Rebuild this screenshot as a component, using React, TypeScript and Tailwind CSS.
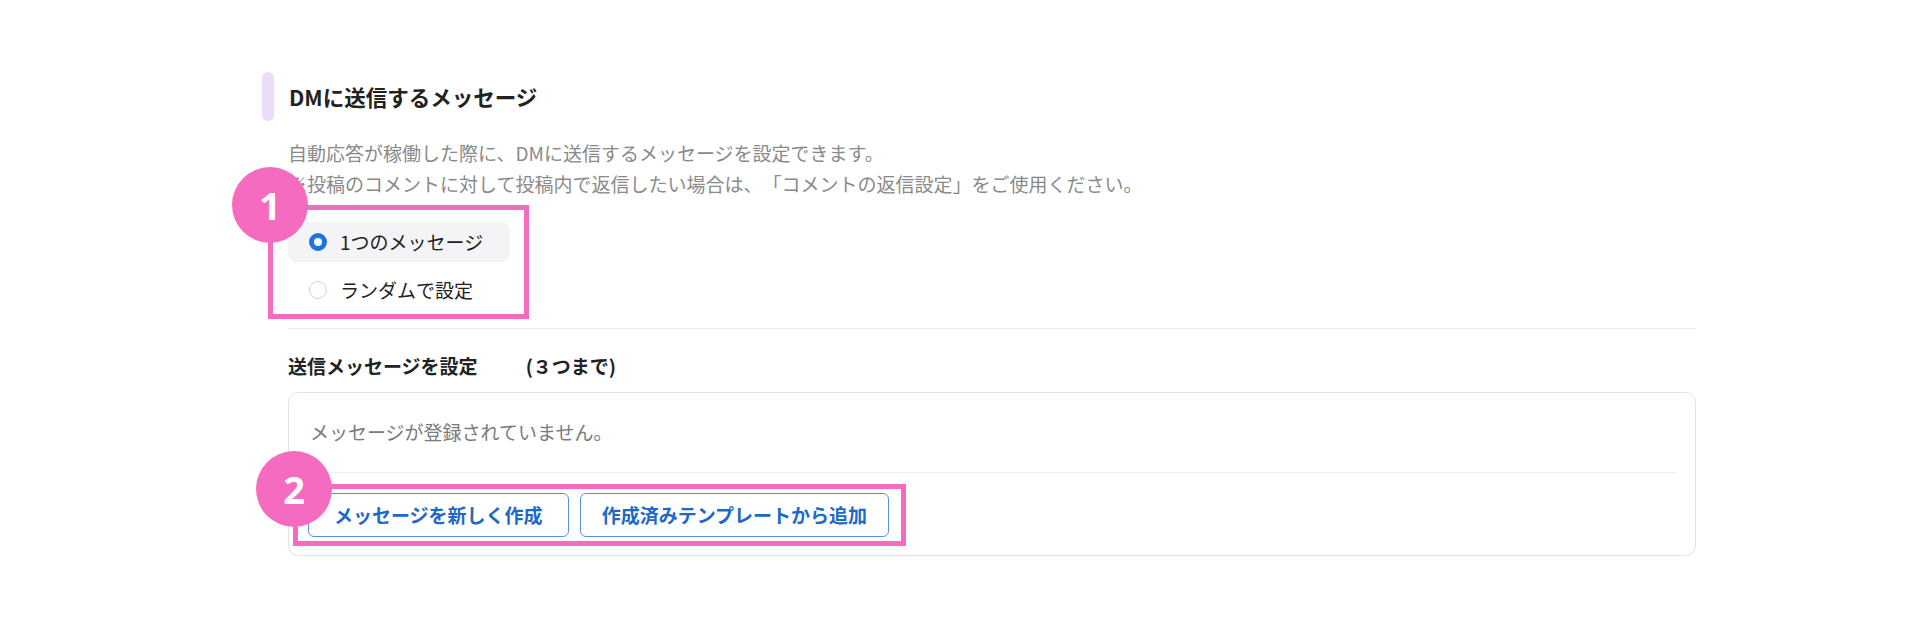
const font = "font-['Noto_Sans_CJK_JP','Noto_Sans',sans-serif] [text-spacing-trim:space-all]";

function Radio({ checked }: { checked: boolean }) {
  return checked ? (
    <span className="w-[18px] h-[18px] rounded-full border-[5px] border-[#1b73e8] bg-white shrink-0" />
  ) : (
    <span className="w-[18px] h-[18px] rounded-full border border-[#d4d4d4] bg-white shrink-0" />
  );
}

function Badge({ n, className }: { n: number; className: string }) {
  return (
    <div
      className={`absolute w-[76px] h-[76px] rounded-full bg-[#f46bbf] text-white flex items-center justify-center text-[38px] font-bold font-['Noto_Sans',sans-serif] ${className}`}
    >
      {n}
    </div>
  );
}

export default function App() {
  const options = [
    { label: "1つのメッセージ", checked: true },
    { label: "ランダムで設定", checked: false },
  ];

  return (
    <div className={`relative w-[1920px] h-[640px] bg-white text-[#222] ${font}`}>
      <div className="pt-[72px] pl-[262px]">
        <div className="flex items-center">
          <div className="w-[12px] h-[49px] rounded-full bg-[#ecdcfc]" />
          <h2 className="ml-[15px] text-[21.5px] font-bold leading-[28px]">
            DMに送信するメッセージ
          </h2>
        </div>

        <div className="pl-[26px] w-[1434px]">
          <div className="mt-[16px] text-[19px] leading-[31px] text-[#8a8a8a]">
            <p>自動応答が稼働した際に、DMに送信するメッセージを設定できます。</p>
            <p>※投稿のコメントに対して投稿内で返信したい場合は、「コメントの返信設定」をご使用ください。</p>
          </div>

          <div className="mt-[23px] flex flex-col gap-[8px]">
            {options.map((o) => (
              <div
                key={o.label}
                className={`flex items-center h-[40px] w-[222px] pl-[21px] rounded-lg ${
                  o.checked ? "bg-[#f4f4f6]" : ""
                }`}
              >
                <Radio checked={o.checked} />
                <span className="ml-[13px] text-[19px] leading-[26px] text-[#222]">{o.label}</span>
              </div>
            ))}
          </div>

          <div className="mt-[18px] h-px bg-[#ebebeb]" />

          <div className="mt-[23px] flex items-center text-[19px] font-bold leading-[28px]">
            <span>送信メッセージを設定</span>
            <span className="ml-[48px]">(３つまで)</span>
          </div>

          <div className="mt-[12px] border border-[#e3e3e3] rounded-[10px] px-[19px] pt-[24px] pb-[18px]">
            <p className="pl-[2px] text-[19px] leading-[30px] text-[#7a7a7a]">
              メッセージが登録されていません。
            </p>
            <div className="mt-[25px] h-px bg-[#efefef]" />
            <div className="mt-[20px] flex gap-[11px]">
              <button className="h-[44px] px-[25px] rounded-md border border-[#5a8fd8] text-[#2068c8] text-[19px] font-bold bg-white">
                メッセージを新しく作成
              </button>
              <button className="h-[44px] px-[21px] rounded-md border border-[#5a8fd8] text-[#2068c8] text-[19px] font-bold bg-white">
                作成済みテンプレートから追加
              </button>
            </div>
          </div>
        </div>
      </div>

      <div className="absolute left-[268px] top-[205px] w-[261px] h-[114px] border-[5px] border-[#f46bbf]" />
      <div className="absolute left-[293px] top-[484px] w-[613px] h-[62px] border-[5px] border-[#f46bbf]" />
      <Badge n={1} className="left-[232px] top-[167px]" />
      <Badge n={2} className="left-[256px] top-[451px]" />
    </div>
  );
}
